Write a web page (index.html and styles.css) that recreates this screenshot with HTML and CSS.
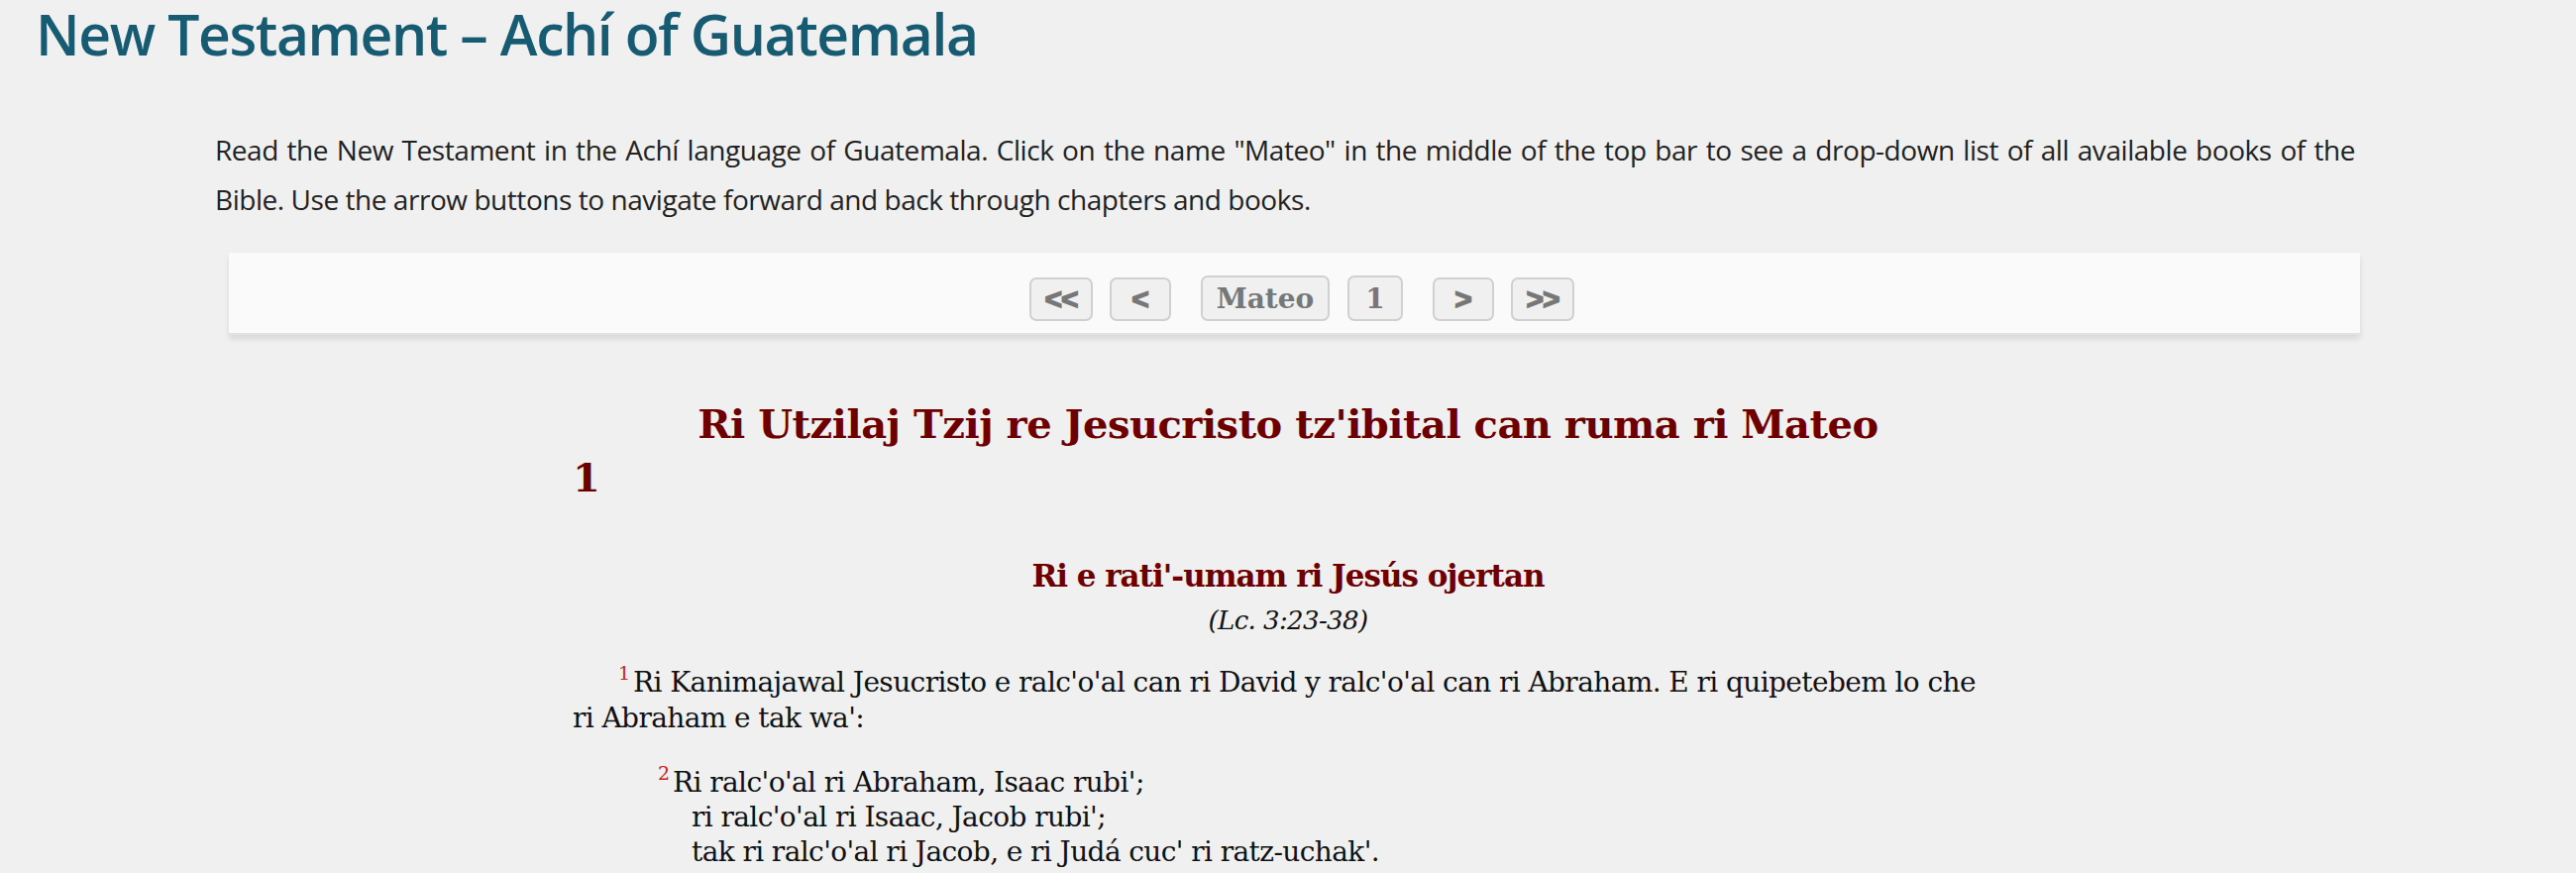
FILE: index.html
```html
<!DOCTYPE html>
<html lang="en">
<head>
  <meta charset="UTF-8">
  <title>New Testament - Achí of Guatemala</title>
  <link rel="stylesheet" href="styles.css">
</head>
<body>
  <h1 class="page-title">New Testament – Achí of Guatemala</h1>
  <p class="intro">Read the New Testament in the Achí language of Guatemala. Click on the name "Mateo" in the middle of the top bar to see a drop-down list of all available books of the Bible. Use the arrow buttons to navigate forward and back through chapters and books.</p>

  <div class="navbar">
    <div class="nav-group">
      <button class="nav-btn arrow wide">&lt;&lt;</button>
      <button class="nav-btn arrow">&lt;</button>
    </div>
    <div class="nav-group middle">
      <button class="nav-btn book">Mateo</button>
      <button class="nav-btn chapter">1</button>
    </div>
    <div class="nav-group">
      <button class="nav-btn arrow">&gt;</button>
      <button class="nav-btn arrow wide">&gt;&gt;</button>
    </div>
  </div>

  <div class="reader">
    <h2 class="book-title">Ri Utzilaj Tzij re Jesucristo tz'ibital can ruma ri Mateo</h2>
    <div class="chapter-num">1</div>
    <h3 class="section-title">Ri e rati'-umam ri Jesús ojertan</h3>
    <div class="parallel">(Lc. 3:23-38)</div>
    <p class="verse"><sup>1</sup><span>Ri Kanimajawal Jesucristo e ralc'o'al can ri David y ralc'o'al can ri Abraham. E ri quipetebem lo che ri Abraham e tak wa':</span></p>
    <p class="poetry"><sup>2</sup>Ri ralc'o'al ri Abraham, Isaac rubi';<br>
      ri ralc'o'al ri Isaac, Jacob rubi';<br>
      tak ri ralc'o'al ri Jacob, e ri Judá cuc' ri ratz-uchak'.</p>
  </div>
</body>
</html>
```

FILE: styles.css
```css
body {
  margin: 0;
  background: #f0f0f0;
  font-family: 'Open Sans', 'Liberation Sans', sans-serif;
  color: #111;
}
.page-title {
  margin: 0;
  padding-left: 36px;
  font-size: 57px;
  line-height: 68px;
  font-weight: 600;
  letter-spacing: -1.4px;
  color: #175b72;
}
.intro {
  margin: 58px 223px 0 217px;
  font-size: 28px;
  line-height: 50px;
  letter-spacing: -0.45px;
  text-align: justify;
  color: #222;
}
.navbar {
  margin: 29px 218px 0 231px;
  background: #fafafa;
  padding: 23px 0 12px 15px;
  display: flex;
  justify-content: center;
  align-items: flex-end;
  gap: 30px;
  box-shadow: 0 4px 6px rgba(0,0,0,0.1);
  border-bottom: 2px solid #e2e2e2;
}
.nav-group {
  display: flex;
  align-items: flex-end;
  gap: 17px;
}
.nav-group.middle {
  gap: 18px;
}
.nav-btn {
  box-sizing: border-box;
  height: 44px;
  padding: 0;
  background: #f0f0f0;
  border: 2px solid #d0d0d0;
  border-radius: 7px;
  color: #777;
  font-weight: bold;
  cursor: pointer;
}
.arrow {
  width: 62px;
  font-family: 'Liberation Sans', sans-serif;
  font-size: 30px;
  line-height: 1;
  -webkit-text-stroke: 1.4px #777;
}
.arrow.wide {
  width: 64px;
  letter-spacing: -1px;
}
.book, .chapter {
  height: 46px;
  font-family: 'DejaVu Serif', serif;
  font-size: 28px;
}
.book {
  width: 130px;
}
.chapter {
  width: 56px;
}
.reader {
  width: 1444px;
  margin: 0 auto;
  padding-top: 63px;
  font-family: 'DejaVu Serif', serif;
}
.book-title {
  margin: 0;
  font-size: 40px;
  line-height: 54px;
  letter-spacing: -0.5px;
  text-align: center;
  color: #6e0000;
}
.chapter-num {
  font-size: 40px;
  line-height: 54px;
  font-weight: bold;
  color: #6e0000;
}
.section-title {
  margin: 48px 0 0;
  font-size: 31px;
  line-height: 48px;
  letter-spacing: -1px;
  text-align: center;
  color: #6e0000;
}
.parallel {
  margin-top: 4px;
  font-size: 26px;
  line-height: 34px;
  letter-spacing: -0.6px;
  font-style: italic;
  text-align: center;
}
.verse, .poetry {
  margin: 28px 0 0;
  font-size: 28px;
  line-height: 36px;
  letter-spacing: -0.6px;
}
.verse {
  text-indent: 46px;
}
.poetry {
  margin-top: 29px;
  line-height: 35px;
  padding-left: 120px;
  text-indent: -34px;
}
sup {
  font-size: 19px;
  line-height: 0;
  vertical-align: 12px;
  letter-spacing: 0;
  color: #cc2222;
  margin-right: 3px;
}
```
